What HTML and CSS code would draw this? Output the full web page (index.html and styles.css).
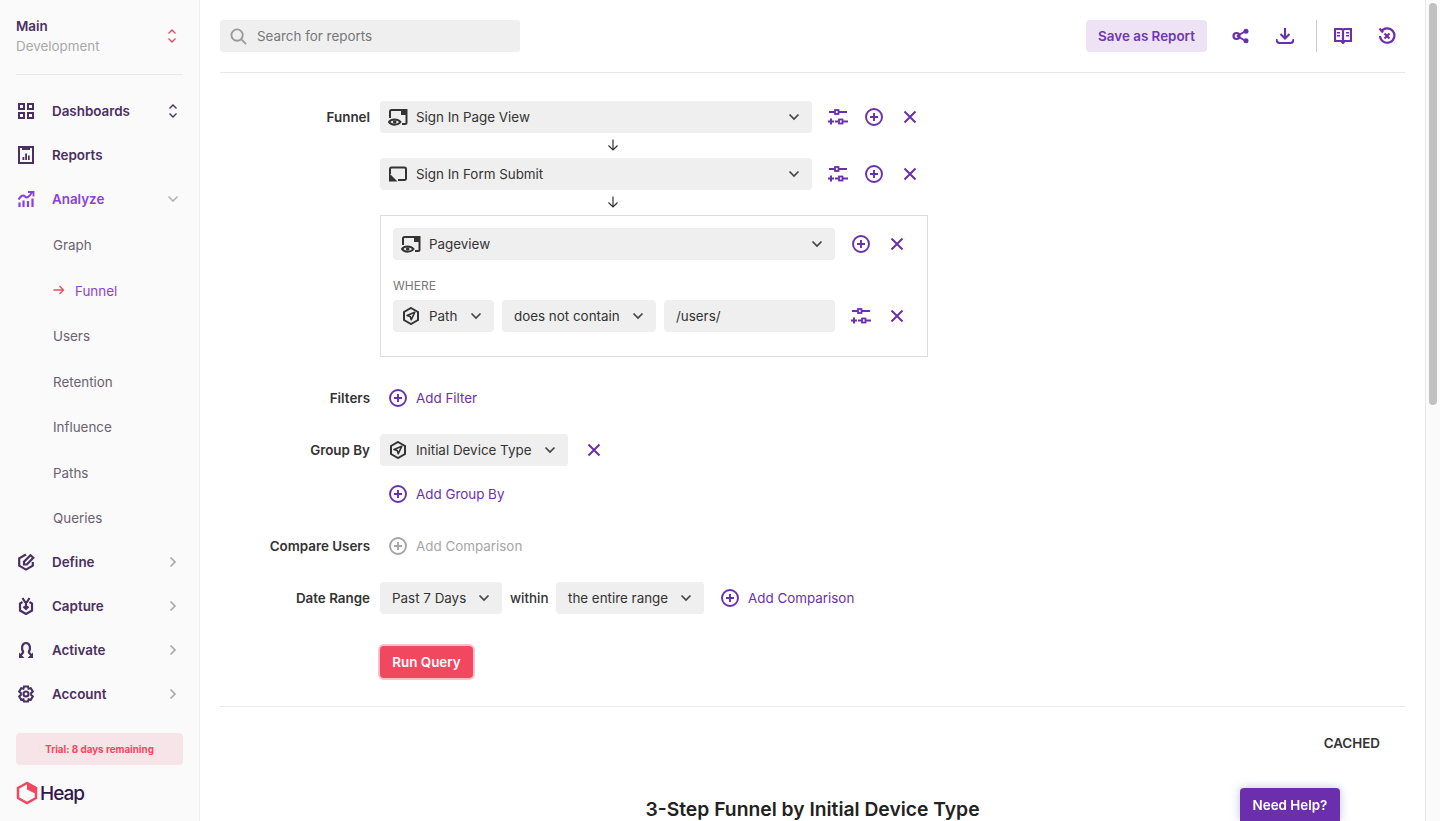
FILE: index.html
```html
<!DOCTYPE html>
<html lang="en">
  <head>
    <meta charset="UTF-8" />
    <title>Funnel - Heap</title>
    <link rel="stylesheet" href="styles.css">
  </head>
  <body>
    <svg class="sprite" xmlns="http://www.w3.org/2000/svg">
      <symbol id="i-down" viewBox="0 0 12 8"><path d="M1.5 1.5 6 6l4.5-4.5" fill="none" stroke="currentColor" stroke-width="1.7"/></symbol>
      <symbol id="i-right" viewBox="0 0 8 12"><path d="M1.5 1.5 6 6l-4.5 4.5" fill="none" stroke="currentColor" stroke-width="1.7"/></symbol>
      <symbol id="i-updown" viewBox="0 0 10 16"><path d="M1.5 5.5 5 2l3.5 3.5M1.5 10.500 5 14l3.5-3.5" fill="none" stroke="currentColor" stroke-width="1.4"/></symbol>
      <symbol id="i-plus" viewBox="0 0 20 20"><circle cx="10" cy="10" r="8" fill="none" stroke="currentColor" stroke-width="1.9"/><path d="M10 6v8M6 10h8" stroke="currentColor" stroke-width="1.9"/></symbol>
      <symbol id="i-x" viewBox="0 0 14 14"><path d="M1.5 1.5l11 11M12.500 1.5l-11 11" stroke="currentColor" stroke-width="2"/></symbol>
      <symbol id="i-sliders" viewBox="0 0 20 16"><path d="M1 3h5.500M10.500 3H19M0 12.500h6M3 9.500v6M7 12.500h3.500M14.500 12.500H20" fill="none" stroke="currentColor" stroke-width="2"/><rect x="7" y="1" width="3.500" height="4" fill="none" stroke="currentColor" stroke-width="1.8"/><rect x="11" y="10.500" width="3.500" height="4" fill="none" stroke="currentColor" stroke-width="1.8"/></symbol>
      <symbol id="i-view" viewBox="0 0 20 18"><path d="M2 10V3.500A1.500 1.500 0 0 1 3.500 2H13M18.500 7v7.500a1.500 1.500 0 0 1-1.500 1.500H14" fill="none" stroke="currentColor" stroke-width="2"/><path d="M13 1h6.500v6H13z" fill="currentColor"/><path d="M1 14c2-3.500 9-3.500 11.500 0-2.500 3.500-9.500 3.500-11.500 0z" fill="none" stroke="currentColor" stroke-width="2"/><circle cx="6.700" cy="14" r="1.800" fill="currentColor"/></symbol>
      <symbol id="i-submit" viewBox="0 0 20 16"><path d="M2 8V3a1.500 1.500 0 0 1 1.500-1.500h13A1.500 1.500 0 0 1 18 3v9.500a1.500 1.500 0 0 1-1.500 1.500H10" fill="none" stroke="currentColor" stroke-width="2"/><path d="M1 15.500V7l8.500 8.500z" fill="currentColor"/></symbol>
      <symbol id="i-hex" viewBox="0 0 18 18"><path d="M9 1 16 5v8L9 17 2 13V5z" fill="none" stroke="currentColor" stroke-width="2"/><path d="M12.800 5.200 5 8.600l3.200 1 1 3.200z" fill="none" stroke="currentColor" stroke-width="1.600" stroke-linejoin="round"/></symbol>
    </svg>

    <div class="app">
      <aside class="sidebar">
        <div class="env">
          <div>
            <div class="env-name">Main</div>
            <div class="env-sub">Development</div>
          </div>
          <svg class="env-arrows"><use href="#i-updown"/></svg>
        </div>

        <nav class="nav">
          <a class="nav-item">
            <svg class="nav-icon" viewBox="-1 -1 18 18" fill="none" stroke="currentColor" stroke-width="2"><rect x="1" y="1" width="5" height="5"/><rect x="10" y="1" width="5" height="5"/><rect x="1" y="10" width="5" height="5"/><rect x="10" y="10" width="5" height="5"/></svg>
            <span>Dashboards</span>
            <svg class="nav-updown"><use href="#i-updown"/></svg>
          </a>
          <a class="nav-item">
            <svg class="nav-icon" viewBox="-1 0 18 18"><rect x="1" y="1" width="14" height="16" fill="none" stroke="currentColor" stroke-width="2"/><path d="M4 1h8v3H4zM4.500 11h1.800v3H4.500zM7.200 7.500H9V14H7.200zM10 9.500h1.700V14H10z" fill="currentColor"/></svg>
            <span>Reports</span>
          </a>
          <a class="nav-item active">
            <svg class="nav-icon" viewBox="-1 -1 18 18" fill="none" stroke="currentColor"><path d="M.5 8.500C3 4.500 5 3.500 7 5.500S11 6 14 1.500" stroke-width="2"/><path d="M10 1h5.500v4.500" stroke-width="1.800"/><path d="M1.500 11.500V16M5.500 9.500V16M10 10v6M14.500 7.500V16" stroke-width="2.200"/></svg>
            <span>Analyze</span>
            <svg class="nav-chevron-down"><use href="#i-down"/></svg>
          </a>
          <div class="subnav">
            <a class="sub-item">Graph</a>
            <a class="sub-item current">
              <svg class="sub-arrow" viewBox="0 0 12 10" fill="none" stroke="currentColor" stroke-width="1.300"><path d="M.5 5h10M6.500 1l4 4-4 4"/></svg>
              Funnel
            </a>
            <a class="sub-item">Users</a>
            <a class="sub-item">Retention</a>
            <a class="sub-item">Influence</a>
            <a class="sub-item">Paths</a>
            <a class="sub-item">Queries</a>
          </div>
          <a class="nav-item">
            <svg class="nav-icon" viewBox="-1 0 18 18" fill="none" stroke="currentColor" stroke-width="2.200"><path d="M8 1.500 1.200 5.400v7.300L8 16.600l6.800-3.900V9"/><path d="M6 11.500V8.800L12.500 2.200l2.800 2.500-6.500 6.800z"/></svg>
            <span>Define</span>
            <svg class="nav-chevron"><use href="#i-right"/></svg>
          </a>
          <a class="nav-item">
            <svg class="nav-icon" viewBox="-1 0 18 18" fill="none" stroke="currentColor" stroke-width="2.200"><path d="M4.500 5 2 6.500v7L8 17l6-3.500v-7L11.500 5"/><path d="M8 6v6M5.500 9.500 8 12l2.500-2.500M4.500 1 7 5h2l2.500-4"/></svg>
            <span>Capture</span>
            <svg class="nav-chevron"><use href="#i-right"/></svg>
          </a>
          <a class="nav-item">
            <svg class="nav-icon" viewBox="-1 0 18 18" fill="none" stroke="currentColor" stroke-width="2.200"><path d="M5.500 11.500C2.800 8 3.800 2 8 2s5.200 6 2.500 9.500"/><path d="M5.500 11 2 15M10.500 11l3.500 4"/><path d="M1 11.500V17h5.500zM15 11.500V17H9.500z" fill="currentColor" stroke="none"/></svg>
            <span>Activate</span>
            <svg class="nav-chevron"><use href="#i-right"/></svg>
          </a>
          <a class="nav-item">
            <svg class="nav-icon" viewBox="0 0 18 18" fill="none" stroke="currentColor" stroke-width="2.100"><path d="M7 1.500h4l.6 2.200 2.200-.6 2 3.400L14.200 8v2l1.600 1.500-2 3.400-2.200-.6-.6 2.200H7l-.6-2.200-2.200.6-2-3.400L3.800 10V8L2.200 6.500l2-3.400 2.200.6z"/><circle cx="9" cy="9" r="2.500"/></svg>
            <span>Account</span>
            <svg class="nav-chevron"><use href="#i-right"/></svg>
          </a>
        </nav>

        <div class="trial">Trial: 8 days remaining</div>
        <div class="logo">
          <svg class="logo-mark" viewBox="0 0 22 24"><path d="M11 2 2 7v10l9 5 9-5V7z" fill="none" stroke="#f2485f" stroke-width="2.500"/><path d="M11 2l9 5v6l-9-4.500z" fill="#f2485f"/></svg>
          <span>Heap</span>
        </div>
      </aside>

      <main class="main">
        <header class="topbar">
          <div class="search">
            <svg class="search-icon" viewBox="0 0 18 18" fill="none" stroke="currentColor" stroke-width="1.900"><circle cx="7.500" cy="7.500" r="6"/><path d="M12 12l5 5"/></svg>
            <span>Search for reports</span>
          </div>
          <div class="top-actions">
            <button class="save-btn">Save as Report</button>
            <svg class="top-icon share" viewBox="0 0 18 16"><path d="M5 8l8-4.500M5 8l8 4.500" stroke="currentColor" stroke-width="2"/><circle cx="4.500" cy="8" r="3" fill="none" stroke="currentColor" stroke-width="2.200"/><circle cx="14" cy="3.300" r="2.500" fill="currentColor"/><circle cx="14" cy="12.700" r="2.500" fill="currentColor"/></svg>
            <svg class="top-icon download" viewBox="0 0 18 16" fill="none" stroke="currentColor" stroke-width="2.100"><path d="M9 0v10M4.500 6 9 10.500 13.500 6M.5 11c0 3 2 4 3.500 4h10c1.500 0 3.500-1 3.500-4"/></svg>
            <span class="top-sep"></span>
            <svg class="top-icon book" viewBox="0 0 18 16"><path d="M1 1h6.500L9 2l1.500-1H17v12h-6.500L9 15l-1.500-2H1zM9 2v12" fill="none" stroke="currentColor" stroke-width="2.200"/><path d="M3 4h3v1.500H3zM3 7h3v1.500H3zM12 4h3v1.500h-3zM12 7h3v1.500h-3z" fill="currentColor"/></svg>
            <svg class="top-icon reset" viewBox="0 0 18 18" fill="none" stroke="currentColor" stroke-width="2.200"><path d="M3.200 4.500A7.200 7.200 0 1 1 2 9"/><path d="M1.500 1.500 5 5.500"/><path d="M6.500 6.500l5 5M11.500 6.500l-5 5"/></svg>
          </div>
        </header>

        <section class="query">
          <div class="row funnel-row">
            <label class="row-label funnel-label">Funnel</label>
            <div class="funnel">
              <div class="step">
                <div class="select wide">
                  <svg class="sel-icon"><use href="#i-view"/></svg>
                  <span>Sign In Page View</span>
                  <svg class="caret"><use href="#i-down"/></svg>
                </div>
                <svg class="act act-sliders"><use href="#i-sliders"/></svg>
                <svg class="act act-plus"><use href="#i-plus"/></svg>
                <svg class="act act-x"><use href="#i-x"/></svg>
              </div>
              <div class="step-arrow"><svg viewBox="0 0 12 12" fill="none" stroke="#333" stroke-width="1.200"><path d="M6 .5v10.500M1.500 6.500 6 11l4.500-4.500"/></svg></div>
              <div class="step">
                <div class="select wide">
                  <svg class="sel-icon"><use href="#i-submit"/></svg>
                  <span>Sign In Form Submit</span>
                  <svg class="caret"><use href="#i-down"/></svg>
                </div>
                <svg class="act act-sliders"><use href="#i-sliders"/></svg>
                <svg class="act act-plus"><use href="#i-plus"/></svg>
                <svg class="act act-x"><use href="#i-x"/></svg>
              </div>
              <div class="step-arrow"><svg viewBox="0 0 12 12" fill="none" stroke="#333" stroke-width="1.200"><path d="M6 .5v10.500M1.500 6.500 6 11l4.500-4.500"/></svg></div>
              <div class="step-box">
                <div class="step">
                  <div class="select box-select">
                    <svg class="sel-icon"><use href="#i-view"/></svg>
                    <span>Pageview</span>
                    <svg class="caret"><use href="#i-down"/></svg>
                  </div>
                  <svg class="act act-plus box-plus"><use href="#i-plus"/></svg>
                  <svg class="act act-x"><use href="#i-x"/></svg>
                </div>
                <div class="where">WHERE</div>
                <div class="step">
                  <div class="select path-select">
                    <svg class="sel-icon hex"><use href="#i-hex"/></svg>
                    <span>Path</span>
                    <svg class="caret"><use href="#i-down"/></svg>
                  </div>
                  <div class="select op-select">
                    <span>does not contain</span>
                    <svg class="caret"><use href="#i-down"/></svg>
                  </div>
                  <div class="select value-input"><span>/users/</span></div>
                  <svg class="act act-sliders box-sliders"><use href="#i-sliders"/></svg>
                  <svg class="act act-x"><use href="#i-x"/></svg>
                </div>
              </div>
            </div>
          </div>

          <div class="row filters-row">
            <label class="row-label">Filters</label>
            <a class="add-link"><svg class="add-icon"><use href="#i-plus"/></svg>Add Filter</a>
          </div>

          <div class="row groupby-row">
            <label class="row-label">Group By</label>
            <div class="select group-select">
              <svg class="sel-icon hex"><use href="#i-hex"/></svg>
              <span>Initial Device Type</span>
              <svg class="caret"><use href="#i-down"/></svg>
            </div>
            <svg class="act act-x group-x"><use href="#i-x"/></svg>
          </div>

          <div class="row addgroup-row">
            <span class="row-label"></span>
            <a class="add-link"><svg class="add-icon"><use href="#i-plus"/></svg>Add Group By</a>
          </div>

          <div class="row compare-row">
            <label class="row-label">Compare Users</label>
            <a class="add-link disabled"><svg class="add-icon"><use href="#i-plus"/></svg>Add Comparison</a>
          </div>

          <div class="row date-row">
            <label class="row-label">Date Range</label>
            <div class="select range-select">
              <span>Past 7 Days</span>
              <svg class="caret"><use href="#i-down"/></svg>
            </div>
            <span class="within">within</span>
            <div class="select entire-select">
              <span>the entire range</span>
              <svg class="caret"><use href="#i-down"/></svg>
            </div>
            <a class="add-link date-add"><svg class="add-icon"><use href="#i-plus"/></svg>Add Comparison</a>
          </div>

          <div class="row run-row">
            <span class="row-label"></span>
            <button class="run-btn">Run Query</button>
          </div>
        </section>

        <section class="result">
          <div class="cached">CACHED</div>
          <h2 class="result-title">3-Step Funnel by Initial Device Type</h2>
        </section>
      </main>

      <div class="scrollbar"><div class="scroll-thumb"></div></div>
    </div>

    <button class="help-btn">Need Help?</button>
  </body>
</html>
```

FILE: styles.css
```css
* {
  box-sizing: border-box;
}
html,
body {
  height: 100%;
  margin: 0;
  overflow: hidden;
}
body {
  font-family: Inter, "Liberation Sans", sans-serif;
  font-size: 13.4px;
  color: #333;
  background-color: #fff;
}
button {
  font-family: inherit;
  border: none;
}
.sprite {
  display: none;
}
.app {
  display: flex;
  height: 821px;
}

/* sidebar */
.sidebar {
  width: 200px;
  flex-shrink: 0;
  background-color: #fafafa;
  border-right: 1px solid #eee;
  padding: 0 16px;
  display: flex;
  flex-direction: column;
}
.env {
  height: 75px;
  padding-top: 16px;
  border-bottom: 1px solid #e8e8e8;
  display: flex;
  justify-content: space-between;
}
.env-name {
  font-weight: 600;
  color: #4a2f63;
  line-height: 20px;
}
.env-sub {
  color: #a9a9a9;
  line-height: 20px;
}
.env-arrows {
  width: 10px;
  height: 16px;
  margin: 12px 6px 0 0;
  color: #f2485f;
}
.nav {
  margin-top: 14px;
}
.nav-item {
  height: 44px;
  display: flex;
  align-items: center;
  font-weight: 600;
  color: #4a2f63;
}
.nav-item.active {
  color: #8b3fdc;
}
.nav-icon {
  width: 18px;
  height: 18px;
  margin: 0 17px 0 1px;
  flex-shrink: 0;
}
.nav-updown {
  width: 10px;
  height: 16px;
  margin-left: auto;
  margin-right: 5px;
}
.nav-chevron {
  width: 8px;
  height: 12px;
  margin-left: auto;
  margin-right: 6px;
  color: #a9a9a9;
}
.nav-chevron-down {
  width: 12px;
  height: 8px;
  margin-left: auto;
  margin-right: 4px;
  color: #b5b5b5;
}
.subnav {
  padding-top: 1.25px;
  margin-bottom: -0.75px;
}
.sub-item {
  height: 45.5px;
  padding-left: 37px;
  display: flex;
  align-items: center;
  color: #6a6270;
}
.sub-item.current {
  color: #8b3fdc;
  position: relative;
  padding-left: 59px;
}
.sub-arrow {
  position: absolute;
  left: 37px;
  top: 17px;
  width: 12px;
  height: 10px;
  color: #f2485f;
}
.trial {
  margin-top: 17px;
  height: 32px;
  background-color: #f6e4e8;
  border-radius: 4px;
  color: #f2485f;
  font-size: 9.8px;
  font-weight: 700;
  display: flex;
  align-items: center;
  justify-content: center;
}
.logo {
  margin-top: 16px;
  display: flex;
  align-items: center;
  gap: 2px;
  font-size: 19px;
  font-weight: 500;
  letter-spacing: -1px;
  color: #33164f;
}
.logo-mark {
  width: 22px;
  height: 24px;
}

/* main column */
.main {
  flex: 1;
  min-width: 0;
  padding: 0 20px;
  overflow: hidden;
}
.topbar {
  height: 73px;
  border-bottom: 1px solid #e8e8e8;
  padding-top: 20px;
  display: flex;
  justify-content: space-between;
  align-items: flex-start;
}
.search {
  width: 300px;
  height: 32px;
  background-color: #efefef;
  border-radius: 3px;
  padding-left: 10px;
  display: flex;
  align-items: center;
  color: #777;
}
.search-icon {
  width: 17px;
  height: 17px;
  margin-right: 10px;
  color: #999;
}
.top-actions {
  display: flex;
  align-items: center;
  height: 32px;
  color: #6b2fae;
}
.save-btn {
  width: 121px;
  height: 32px;
  background-color: #ede3f5;
  border-radius: 4px;
  color: #6f37b2;
  font-size: 13.4px;
  font-weight: 600;
}
.top-icon {
  width: 18px;
  height: 16px;
}
.share {
  margin-left: 25px;
}
.download {
  margin-left: 26px;
}
.top-sep {
  width: 1px;
  height: 32px;
  background-color: #ccc;
  margin-left: 22px;
}
.book {
  margin-left: 17px;
}
.reset {
  margin-left: 26px;
  margin-right: 9px;
  height: 18px;
}

/* query form */
.query {
  padding-top: 28px;
  padding-bottom: 28px;
  border-bottom: 1px solid #e8e8e8;
}
.row {
  display: flex;
  align-items: center;
  min-height: 32px;
}
.funnel-row {
  align-items: flex-start;
}
.row-label {
  width: 150px;
  margin-right: 10px;
  text-align: right;
  font-weight: 600;
  color: #333;
  flex-shrink: 0;
}
.funnel-label {
  line-height: 32px;
}
.step {
  display: flex;
  align-items: center;
  height: 32px;
}
.step-arrow {
  height: 24px;
  margin-bottom: 1px;
  width: 466px;
  display: flex;
  align-items: center;
  justify-content: center;
}
.step-arrow svg {
  width: 12px;
  height: 12px;
}
.select {
  height: 32px;
  background-color: #efefef;
  border-radius: 4px;
  padding: 0 12px;
  display: flex;
  align-items: center;
  color: #333;
  flex-shrink: 0;
}
.select span {
  white-space: nowrap;
}
.caret {
  width: 12px;
  height: 8px;
  margin-left: auto;
  color: #444;
  flex-shrink: 0;
}
.sel-icon {
  width: 20px;
  height: 18px;
  margin-left: -4px;
  margin-right: 8px;
  color: #333;
  flex-shrink: 0;
}
.sel-icon.hex {
  width: 18px;
  height: 18px;
  margin-left: -3px;
  margin-right: 9px;
}
.wide {
  width: 432px;
}
.act {
  color: #6b2fae;
  flex-shrink: 0;
}
.act-sliders {
  width: 20px;
  height: 16px;
  margin-left: 16px;
}
.act-plus {
  width: 20px;
  height: 20px;
  margin-left: 16px;
}
.act-x {
  width: 14px;
  height: 14px;
  margin-left: 19px;
}
.step-box {
  width: 548px;
  height: 142px;
  border: 1px solid #ddd;
  padding: 12px 12px 0;
}
.box-select {
  width: 442px;
}
.where {
  height: 40px;
  padding-top: 18px;
  line-height: 16px;
  font-size: 12px;
  color: #777;
}
.path-select {
  width: 101px;
}
.op-select {
  width: 154px;
  margin-left: 8px;
}
.value-input {
  width: 171px;
  margin-left: 8px;
}
.box-plus {
  margin-left: 16px;
}
.box-sliders {
  margin-left: 16px;
}
.add-link {
  display: flex;
  align-items: center;
  color: #6b2fae;
  margin-left: 8px;
}
.add-icon {
  width: 20px;
  height: 20px;
  margin-right: 8px;
}
.add-link.disabled {
  color: #a5a5a5;
}
.filters-row {
  margin-top: 25px;
}
.groupby-row {
  margin-top: 20px;
}
.group-select {
  width: 188px;
}
.group-x {
  margin-left: 19px;
}
.addgroup-row {
  margin-top: 12px;
}
.compare-row,
.date-row {
  margin-top: 20px;
}
.range-select {
  width: 122px;
}
.within {
  width: 38px;
  margin: 0 8px;
  color: #333;
  font-weight: 500;
  white-space: nowrap;
}
.entire-select {
  width: 148px;
}
.date-add {
  margin-left: 16px;
}
.run-row {
  margin-top: 32px;
}
.run-btn {
  width: 93px;
  height: 32px;
  background-color: #f2485f;
  color: #fff;
  font-size: 13.4px;
  font-weight: 600;
  border-radius: 4px;
  box-shadow: 0 0 0 2px #fcc0ca;
}

/* result */
.cached {
  margin-top: 27px;
  text-align: right;
  padding-right: 25px;
  font-weight: 600;
  line-height: 18px;
  color: #333;
}
.result-title {
  margin: 45px 0 0;
  text-align: center;
  font-size: 19.3px;
  font-weight: 600;
  line-height: 24px;
  color: #222;
}

/* fake scrollbar */
.scrollbar {
  width: 15px;
  flex-shrink: 0;
  background-color: #fafafa;
  border-left: 1px solid #e8e8e8;
  padding: 3px 3px 0 3px;
}
.scroll-thumb {
  height: 402px;
  background-color: #c1c1c1;
  border-radius: 4px;
}

.help-btn {
  position: fixed;
  left: 1240px;
  top: 788px;
  width: 100px;
  height: 33px;
  background-color: #6b2fae;
  color: #fff;
  font-size: 13.4px;
  font-weight: 600;
  border-radius: 4px 4px 0 0;
  box-shadow: 0 0 10px rgba(60, 100, 160, 0.35);
}
```
